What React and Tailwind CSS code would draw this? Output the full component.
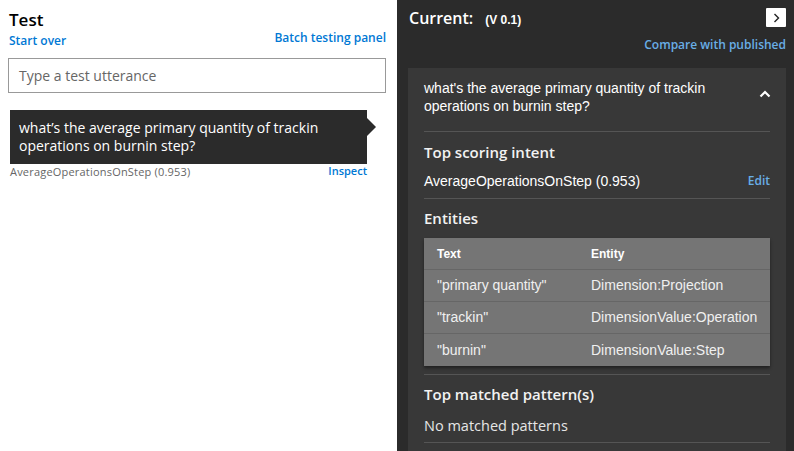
const seg = { fontFamily: '"Open Sans", "Noto Sans", sans-serif' }
const arial = { fontFamily: '"Liberation Sans", Arial, sans-serif' }

const entities = [
  { text: '"primary quantity"', entity: 'Dimension:Projection' },
  { text: '"trackin"', entity: 'DimensionValue:Operation' },
  { text: '"burnin"', entity: 'DimensionValue:Step' },
]

function TestPanel() {
  return (
    <section className="w-[397px] shrink-0 bg-white pt-[8px] pl-[9px] pr-[11px]" style={seg}>
      <h1 className="text-[17px] font-semibold leading-[24px] text-black">Test</h1>
      <div className="flex justify-between h-[18px]">
        <a className="mt-[3px] text-[12px] font-semibold leading-[12px] text-[#0078d4]">Start over</a>
        <a className="text-[12px] font-semibold leading-[12px] text-[#0078d4]">Batch testing panel</a>
      </div>
      <div className="mt-[8px] -ml-[1px] h-[35px] border border-[#999] flex items-center px-[10px]">
        <span className="text-[14px] text-[#666]">Type a test utterance</span>
      </div>

      {/* utterance bubble */}
      <div className="mt-[17px] ml-[1px] w-[357px] relative">
        <div className="bg-[#2b2b2b] text-white text-[14px] leading-[18px] px-[9px] py-[9px]">
          what’s the average primary quantity of trackin operations on burnin step?
        </div>
        <div className="absolute top-[8px] -right-[9px] w-0 h-0 border-y-[9px] border-y-transparent border-l-[9px] border-l-[#2b2b2b]" />
        <div className="flex justify-between">
          <span className="text-[11px] tracking-[0.2px] leading-[16px] text-[#666]">AverageOperationsOnStep (0.953)</span>
          <a className="text-[11px] font-semibold leading-[14px] text-[#0078d4]">Inspect</a>
        </div>
      </div>
    </section>
  )
}

function Heading({ children }) {
  return <h3 className="text-[15px] font-semibold leading-[20px] text-[#f2f2f2]" style={seg}>{children}</h3>
}

function ResultPanel() {
  return (
    <section className="flex-1 bg-[#2b2b2b] pl-[11px] pr-[8px] flex flex-col min-w-0">
      <div className="flex justify-between items-start pt-[8px] h-[36px]">
        <div className="flex items-baseline gap-[12px] ml-[1px]">
          <span className="text-[16px] font-semibold leading-[20px] text-white" style={seg}>Current:</span>
          <span className="text-[12px] font-semibold text-white" style={arial}>(V 0.1)</span>
        </div>
        <button className="w-[20px] h-[19px] bg-white rounded-[1px] flex items-center justify-center">
          <svg width="7" height="10" viewBox="0 0 7 10">
            <polyline points="1.5,1 5.5,5 1.5,9" fill="none" stroke="#222" strokeWidth="1.4" />
          </svg>
        </button>
      </div>
      <div className="flex justify-end h-[32px]">
        <a className="mt-[2px] text-[12px] font-semibold leading-[14px] text-[#69aee6]" style={seg}>Compare with published</a>
      </div>

      <div className="flex-1 bg-[#383838] px-[16px]">
        <div className="flex justify-between items-start pt-[11px] pb-[16px] border-b border-[#555]">
          <p className="text-[14px] leading-[18px] text-white w-[300px]" style={arial}>
            what's the average primary quantity of trackin operations on burnin step?
          </p>
          <svg className="mt-[11px] mr-[-1px]" width="12" height="8" viewBox="0 0 12 8">
            <polyline points="1.5,6.5 6,2 10.5,6.5" fill="none" stroke="#fff" strokeWidth="2.2" />
          </svg>
        </div>

        <div className="pt-[10px] pb-[7px] border-b border-[#555]">
          <Heading>Top scoring intent</Heading>
          <div className="mt-[9px] flex justify-between items-center">
            <span className="text-[14px] leading-[20px] text-white" style={arial}>AverageOperationsOnStep (0.953)</span>
            <a className="text-[12px] font-semibold text-[#69aee6]" style={seg}>Edit</a>
          </div>
        </div>

        <div className="pt-[9px] pb-[8px] border-b border-[#555]">
          <Heading>Entities</Heading>
          <div className="mt-[10px] bg-[#757575] shadow-[0_2px_3px_rgba(0,0,0,0.45)]" style={arial}>
            <div className="grid grid-cols-[154px_1fr] h-[32px] items-center border-b border-[#666]">
              <span className="px-[13px] text-[12px] font-bold text-white">Text</span>
              <span className="px-[13px] text-[12px] font-bold text-white">Entity</span>
            </div>
            {entities.map((e, i) => (
              <div key={i} className={`grid grid-cols-[154px_1fr] h-[32px] items-center ${i < entities.length - 1 ? 'border-b border-[#666]' : ''}`}>
                <span className="px-[13px] text-[14px] text-[#f0f0f0] whitespace-nowrap">{e.text}</span>
                <span className="px-[13px] text-[14px] text-[#f0f0f0] whitespace-nowrap">{e.entity}</span>
              </div>
            ))}
          </div>
        </div>

        <div className="pt-[9px] pb-[6px] border-b border-[#555]">
          <Heading>Top matched pattern(s)</Heading>
          <p className="mt-[12px] text-[14.5px] leading-[20px] text-[#e6e6e6]" style={seg}>No matched patterns</p>
        </div>
      </div>
    </section>
  )
}

export default function App() {
  return (
    <div className="w-[794px] h-[451px] flex overflow-hidden">
      <TestPanel />
      <ResultPanel />
    </div>
  )
}
